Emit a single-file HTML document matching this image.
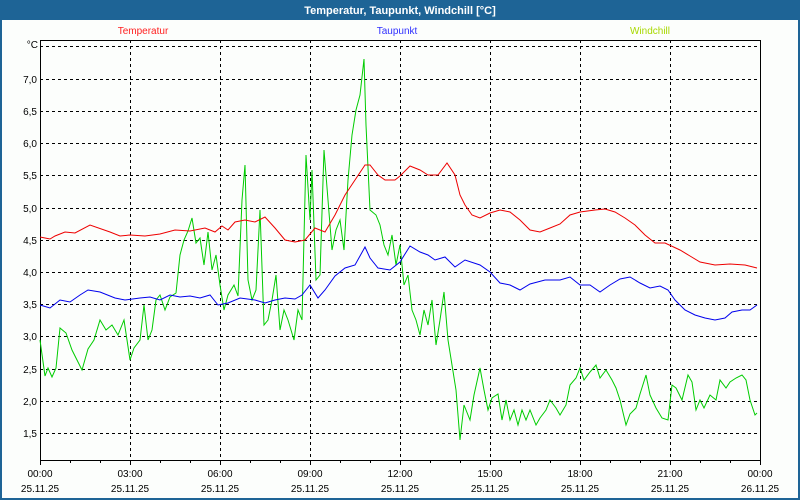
<!DOCTYPE html>
<html><head><meta charset="utf-8"><style>
html,body{margin:0;padding:0;width:800px;height:500px;overflow:hidden;background:#fcfefc;}
svg{display:block}
text{font-family:"Liberation Sans",sans-serif;font-size:10px;}
</style></head><body>
<svg width="800" height="500" xmlns="http://www.w3.org/2000/svg" shape-rendering="crispEdges">
<rect x="0" y="0" width="800" height="500" fill="#1e6496"/>
<rect x="2" y="20" width="796" height="478" fill="#fcfefc"/>
<text x="400" y="14" text-anchor="middle" fill="#fff" font-weight="bold" style="font-size:11px">Temperatur, Taupunkt, Windchill [°C]</text>
<text x="143" y="34" text-anchor="middle" fill="#ff2020">Temperatur</text>
<text x="397" y="34" text-anchor="middle" fill="#3030ff">Taupunkt</text>
<text x="650" y="34" text-anchor="middle" fill="#a8d800">Windchill</text>
<g stroke="#000" stroke-width="1" stroke-dasharray="3,3" fill="none">
<path d="M40 46.5H760M40 79.5H760M40 111.5H760M40 143.5H760M40 175.5H760M40 208.5H760M40 240.5H760M40 272.5H760M40 304.5H760M40 336.5H760M40 369.5H760M40 401.5H760M40 433.5H760"/>
<path d="M130.5 40V460M220.5 40V460M310.5 40V460M400.5 40V460M490.5 40V460M580.5 40V460M670.5 40V460"/>
</g>
<rect x="40.5" y="40.5" width="720" height="420" fill="none" stroke="#000"/>
<path stroke="#000" d="M40.5 460v5M70.5 460v3M100.5 460v3M130.5 460v5M160.5 460v3M190.5 460v3M220.5 460v5M250.5 460v3M280.5 460v3M310.5 460v5M340.5 460v3M370.5 460v3M400.5 460v5M430.5 460v3M460.5 460v3M490.5 460v5M520.5 460v3M550.5 460v3M580.5 460v5M610.5 460v3M640.5 460v3M670.5 460v5M700.5 460v3M730.5 460v3M760.5 460v5"/>
<g text-anchor="end" fill="#000">
<text x="38" y="48">°C</text><text x="37" y="83">7,0</text><text x="37" y="115">6,5</text><text x="37" y="147">6,0</text><text x="37" y="179">5,5</text><text x="37" y="212">5,0</text><text x="37" y="244">4,5</text><text x="37" y="276">4,0</text><text x="37" y="308">3,5</text><text x="37" y="340">3,0</text><text x="37" y="373">2,5</text><text x="37" y="405">2,0</text><text x="37" y="437">1,5</text>
</g>
<g text-anchor="middle" fill="#000">
<text x="40" y="477">00:00</text><text x="130" y="477">03:00</text><text x="220" y="477">06:00</text><text x="310" y="477">09:00</text><text x="400" y="477">12:00</text><text x="490" y="477">15:00</text><text x="580" y="477">18:00</text><text x="670" y="477">21:00</text><text x="760" y="477">00:00</text>
<text x="40" y="492">25.11.25</text><text x="130" y="492">25.11.25</text><text x="220" y="492">25.11.25</text><text x="310" y="492">25.11.25</text><text x="400" y="492">25.11.25</text><text x="490" y="492">25.11.25</text><text x="580" y="492">25.11.25</text><text x="670" y="492">25.11.25</text><text x="760" y="492">26.11.25</text>
</g>
<g fill="none" stroke-width="1" shape-rendering="auto">
<polyline stroke="#00cc00" points="40,340 45,376 48,368 52,377 56,368 60,328 66,333 72,350 78,362 82,370 88,349 94,340 100,320 106,330 112,325 118,335 124,320 130,360 134,348 140,340 144,305 148,340 152,330 156,300 160,295 165,310 170,297 176,293 180,255 184,240 188,231 192,218 196,243 200,238 204,265 208,232 212,270 216,255 220,285 224,310 228,295 234,285 238,296 242,200 245,165 248,280 252,300 256,290 260,210 264,325 268,320 272,300 276,275 280,330 284,310 288,320 294,340 298,310 302,320 306,155 310,220 312,170 316,280 320,275 324,150 328,200 332,250 336,230 340,220 344,250 348,180 352,135 356,110 360,95 364,59 366,125 370,210 376,215 380,225 384,245 388,255 392,235 396,265 400,245 404,285 408,275 412,310 416,320 420,335 424,310 428,325 432,300 436,345 440,320 444,292 448,340 452,365 456,390 460,440 464,405 470,420 474,395 480,368 484,390 488,410 492,398 498,394 502,420 506,400 510,420 514,410 518,425 522,410 526,420 530,410 536,425 540,418 546,410 550,400 556,408 560,415 566,405 570,385 576,378 580,368 584,380 590,372 596,365 600,378 606,370 612,380 616,388 620,400 626,425 630,414 636,408 640,394 646,375 650,395 656,408 662,418 668,420 672,385 676,388 682,400 688,375 692,382 696,410 700,400 704,408 710,395 716,400 720,380 726,388 730,382 736,378 742,375 746,380 750,400 755,415 757,413"/>
<polyline stroke="#0000ee" points="40,305 50,308 60,300 70,302 80,295 88,290 100,292 115,298 125,300 140,298 150,297 160,300 170,295 180,297 190,296 200,298 210,295 218,305 228,303 240,298 255,300 265,303 275,300 285,298 295,299 302,295 310,285 318,298 325,290 335,276 345,268 355,265 365,247 370,258 378,268 390,270 400,262 410,246 420,252 428,255 435,260 445,257 455,267 465,260 480,265 490,272 500,283 510,285 520,290 530,284 545,280 560,280 570,277 580,285 590,285 600,292 610,285 620,279 630,277 640,283 650,288 660,286 668,290 675,300 685,310 695,315 705,318 715,320 725,318 732,312 742,310 750,310 757,305"/>
<polyline stroke="#ee0000" points="40,237 50,239 55,236 65,232 75,233 90,225 110,232 120,236 130,235 145,236 160,234 175,230 190,231 205,228 215,232 222,226 228,230 235,222 245,220 255,222 265,217 275,228 285,240 295,242 305,240 315,228 325,232 335,215 345,195 355,180 365,165 370,165 378,175 385,180 395,180 400,176 410,166 420,170 428,175 438,175 447,163 455,175 460,195 465,205 472,215 480,218 490,213 500,210 510,212 520,220 530,230 540,232 550,228 560,224 570,215 580,212 595,210 605,209 615,212 625,218 635,225 645,235 655,243 665,243 680,250 690,256 700,262 715,265 730,264 745,265 757,268"/>
</g>
</svg>
</body></html>
